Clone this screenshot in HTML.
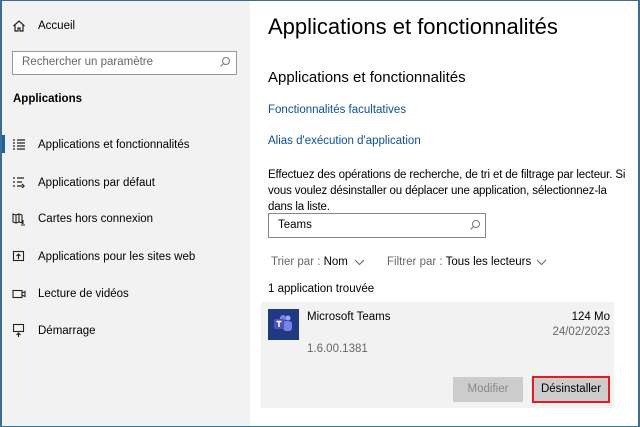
<!DOCTYPE html>
<html><head><meta charset="utf-8"><style>
*{margin:0;padding:0;box-sizing:border-box}
body{width:640px;height:427px;overflow:hidden;font-family:"Liberation Sans",sans-serif;position:relative;background:#fff;color:#000}
.frame{position:absolute;inset:0;border:1px solid #3b6f8f;border-left-width:2px;border-right-width:2px;pointer-events:none;z-index:9}
.left{position:absolute;left:0;top:0;width:250px;height:427px;background:#f2f2f2}
.a{position:absolute;white-space:nowrap}
.nav{font-size:11.5px;color:#000}
.ic{position:absolute;left:12px}
.link{color:#0b4f9e;font-size:11.5px}
</style></head><body>
<div class="left">
 <svg class="ic" style="top:19px" width="14" height="14" viewBox="0 0 14 14" fill="none" stroke="#222" stroke-width="1.2"><path d="M1.5 7L7 2l5.5 5M3 6v6h3V9h2v3h3V6"/></svg>
 <div class="a nav" style="left:38px;top:20px">Accueil</div>
 <div class="a" style="left:12px;top:51px;width:225px;height:24px;border:1px solid #999;background:#fff"></div>
 <div class="a" style="left:22px;top:56px;font-size:11.5px;color:#666">Rechercher un paramètre</div>
 <svg class="a" style="left:219px;top:56px" width="12" height="12" viewBox="0 0 12 12" fill="none" stroke="#777"><circle cx="7" cy="5" r="3.5"/><path d="M4.5 7.5L1.5 10.5"/></svg>
 <div class="a" style="left:13px;top:93px;font-size:11.5px;font-weight:bold">Applications</div>
 <div class="a" style="left:2px;top:135px;width:3px;height:18px;background:#1a5fb4"></div>
 <svg class="ic" style="top:138px" width="14" height="13" viewBox="0 0 14 13" stroke="#222" stroke-width="1.3"><path d="M1 2h2M5 2h8M1 5h2M5 5h8M1 8h2M5 8h8M1 11h2M5 11h8"/></svg>
 <div class="a nav" style="left:38px;top:139px">Applications et fonctionnalités</div>
 <svg class="ic" style="top:176px" width="14" height="12" viewBox="0 0 14 12" stroke="#222" stroke-width="1.3" fill="none"><path d="M1 2h2M5 2h7M1 6h2M5 6h5M1 10h2M5 10h5M10 8l2 2-2 2"/></svg>
 <div class="a nav" style="left:38px;top:177px">Applications par défaut</div>
 <svg class="ic" style="top:212px" width="14" height="14" viewBox="0 0 14 14" stroke="#222" stroke-width="1.1" fill="none"><path d="M1 2l3 1 3-1 3 1v8l-3-1-3 1-3-1zM4 3v8M7 2v8M11 8v4M9 13h4"/></svg>
 <div class="a nav" style="left:38px;top:213px">Cartes hors connexion</div>
 <svg class="ic" style="top:250px" width="14" height="12" viewBox="0 0 14 12" stroke="#222" stroke-width="1.1" fill="none"><rect x="1.5" y="1.5" width="10" height="9"/><path d="M6.5 9V4M4.5 6l2-2 2 2"/></svg>
 <div class="a nav" style="left:38px;top:251px">Applications pour les sites web</div>
 <svg class="ic" style="top:288px" width="15" height="12" viewBox="0 0 15 12" stroke="#222" stroke-width="1.1" fill="none"><rect x="1" y="2.5" width="9" height="7"/><path d="M10 5l3-1.5v5L10 7"/></svg>
 <div class="a nav" style="left:38px;top:288px">Lecture de vidéos</div>
 <svg class="ic" style="top:323px" width="14" height="15" viewBox="0 0 14 15" stroke="#222" stroke-width="1.1" fill="none"><rect x="1.5" y="1.5" width="10" height="7"/><path d="M6.5 14V10M4.5 12l2-2 2 2"/></svg>
 <div class="a nav" style="left:38px;top:325px">Démarrage</div>
</div>

<div class="a" style="left:268px;top:14px;font-size:22px;color:#000">Applications et fonctionnalités</div>
<div class="a" style="left:268px;top:69px;font-size:15px">Applications et fonctionnalités</div>
<div class="a link" style="left:268px;top:104px">Fonctionnalités facultatives</div>
<div class="a link" style="left:268px;top:135px">Alias d'exécution d'application</div>
<div class="a" style="left:268px;top:167px;font-size:11.5px;line-height:16px;letter-spacing:-0.15px">Effectuez des opérations de recherche, de tri et de filtrage par lecteur. Si<br>vous voulez désinstaller ou déplacer une application, sélectionnez-la<br>dans la liste.</div>
<div class="a" style="left:268px;top:213px;width:218px;height:25px;border:1px solid #888;background:#fff"></div>
<div class="a" style="left:278px;top:219px;font-size:11.5px">Teams</div>
<svg class="a" style="left:469px;top:219px" width="12" height="12" viewBox="0 0 12 12" fill="none" stroke="#777"><circle cx="7" cy="5" r="3.5"/><path d="M4.5 7.5L1.5 10.5"/></svg>
<div class="a" style="left:271px;top:256px;font-size:11.5px;color:#666">Trier par : <span style="color:#000">Nom</span></div>
<svg class="a" style="left:354px;top:259px" width="11" height="7" viewBox="0 0 11 7" fill="none" stroke="#666"><path d="M1 1l4.5 4.5L10 1"/></svg>
<div class="a" style="left:387px;top:256px;font-size:11.5px;color:#666">Filtrer par : <span style="color:#000">Tous les lecteurs</span></div>
<svg class="a" style="left:536px;top:259px" width="11" height="7" viewBox="0 0 11 7" fill="none" stroke="#666"><path d="M1 1l4.5 4.5L10 1"/></svg>
<div class="a" style="left:268px;top:283px;font-size:11.5px">1 application trouvée</div>
<div class="a" style="left:261px;top:302px;width:353px;height:106px;background:#f2f2f2"></div>
<div class="a" style="left:268px;top:309px;width:31px;height:31px;background:#1f3a80"></div>
<svg class="a" style="left:272px;top:313px" width="23" height="23" viewBox="0 0 23 23"><circle cx="16" cy="5" r="2.5" fill="#9ea9f0"/><rect x="11" y="8" width="9" height="10" rx="3" fill="#7b83eb"/><circle cx="11" cy="5" r="3" fill="#7b83eb"/><rect x="2" y="6" width="10" height="10" rx="1" fill="#4b53bc"/><path d="M4.5 8.5h5M7 8.5v5.5" stroke="#fff" stroke-width="1.5"/></svg>
<div class="a" style="left:307px;top:311px;font-size:11.5px">Microsoft Teams</div>
<div class="a" style="left:307px;top:343px;font-size:11.5px;color:#666">1.6.00.1381</div>
<div class="a" style="left:560px;top:311px;font-size:11.5px;width:50px;text-align:right">124 Mo</div>
<div class="a" style="left:530px;top:326px;font-size:11.5px;color:#666;width:80px;text-align:right">24/02/2023</div>
<div class="a" style="left:453px;top:377px;width:70px;height:25px;background:#ccc;color:#888;font-size:11.5px;text-align:center;line-height:25px">Modifier</div>
<div class="a" style="left:532px;top:376px;width:78px;height:27px;border:2px solid #e01b24;background:#ccc;font-size:11.5px;text-align:center;line-height:23px">Désinstaller</div>
<div class="frame"></div>
</body></html>
